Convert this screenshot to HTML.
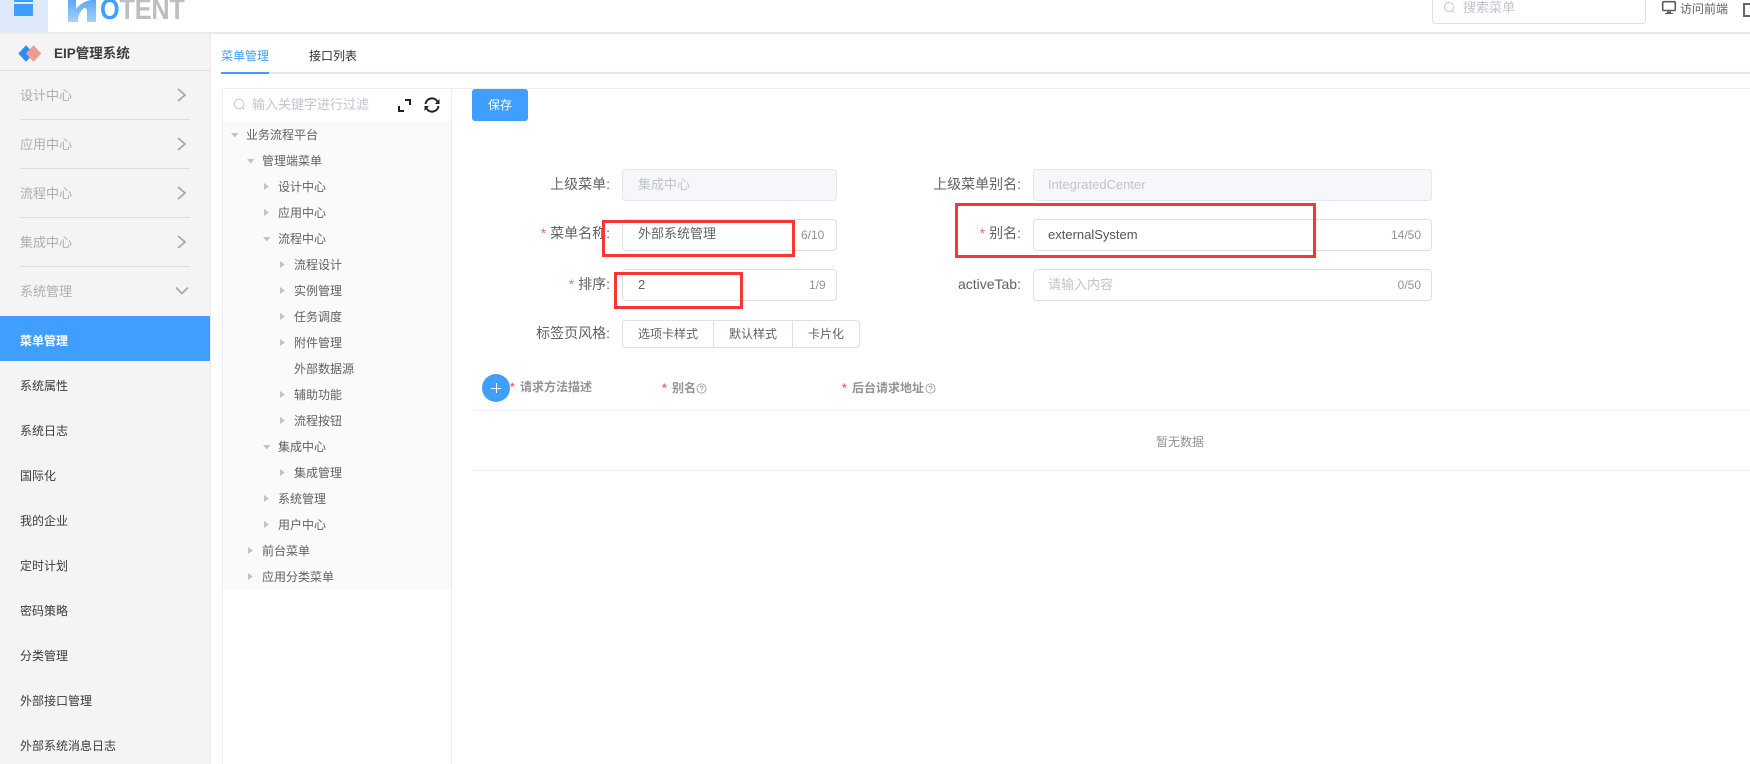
<!DOCTYPE html>
<html lang="zh">
<head>
<meta charset="utf-8">
<style>
html,body{margin:0;padding:0;width:1750px;height:764px;overflow:hidden;background:#fff}
body{position:relative;font-family:"Liberation Sans","Noto Sans CJK SC",sans-serif;color:#606266;font-size:12px}
.a{position:absolute}
.t{position:absolute;white-space:nowrap;line-height:20px;height:20px}
.r{text-align:right}
.box{position:absolute;box-sizing:border-box;border:1px solid #dcdfe6;border-radius:4px;background:#fff}
.dis{background:#f5f7fa;border-color:#e4e7ed}
.red{position:absolute;box-sizing:border-box;border:3px solid #f63737}
.m{color:#aeaeae;font-size:13px;left:20px}
.d{position:absolute;left:20px;width:170px;height:1px;background:#dcdcdc}
.s{color:#3b3b3b;font-size:12px;left:20px}
.n{color:#606266;font-size:12px}
.lb{color:#606266;font-size:14px;right:0}
.star{color:#f56c6c}
.c{color:#909399;font-size:12px}
.th{color:#909399;font-size:12px;font-weight:700}
</style>
</head>
<body>
<!-- header -->
<div class="a" style="left:0;top:0;width:48px;height:32px;background:#deeafc"></div>
<div class="a" style="left:14px;top:0;width:19px;height:16px;background:#409eff"></div>
<div class="a" style="left:14px;top:2px;width:19px;height:2px;background:#deeafc"></div>
<svg class="a" style="left:66px;top:0" width="34" height="23" viewBox="66 0 34 23">
<defs><linearGradient id="g" x1="0" y1="0" x2="0" y2="1"><stop offset="0" stop-color="#5aa9f5"/><stop offset="1" stop-color="#a9d0f8"/></linearGradient></defs>
<path d="M68 22V0H76V9C80 4 85 1 91 0H96V22H87V12C87 7 84 7 82 10C79 13 78 17 78 22Z" fill="url(#g)"/>
</svg>
<div class="t" style="left:100px;top:-5px;height:30px;line-height:30px;font-size:29px;font-weight:700;letter-spacing:-.2px;color:#bcbec2;transform:scaleX(.87);transform-origin:0 0"><span style="color:#409eff">O</span>TENT</div>
<div class="a" style="left:0;top:32px;width:1750px;height:2px;background:#e8e9eb"></div>

<div class="box" style="left:1432px;top:-10px;width:214px;height:34px;border-color:#dcdfe6"></div>
<svg class="a" style="left:1443px;top:1px" width="13" height="13" viewBox="0 0 13 13" fill="none" stroke="#c8ccd4" stroke-width="1.1"><circle cx="6" cy="6" r="4.6"/><path d="M9.5 9.5L11.5 11.5"/></svg>
<div class="t" style="left:1463px;top:-2px;font-size:13px;color:#c0c4cc">搜索菜单</div>
<svg class="a" style="left:1661px;top:0" width="16" height="15" viewBox="0 0 16 15" fill="none"><rect x="1.7" y="1.7" width="12.6" height="8.8" rx="1" stroke="#5c5c5c" stroke-width="1.6"/><path d="M6 11.5h4V13h2v1H4v-1h2z" fill="#5c5c5c"/></svg>
<div class="t" style="left:1680px;top:-1px;color:#606266">访问前端</div>
<svg class="a" style="left:1743px;top:3px" width="7" height="14" viewBox="0 0 7 14" fill="none" stroke="#666" stroke-width="2"><path d="M7 1H1V13H7"/></svg>

<!-- sidebar -->
<div class="a" style="left:0;top:34px;width:210px;height:730px;background:#f4f4f4;border-right:1px solid #e9e9ee"></div>
<svg class="a" style="left:18px;top:45px" width="24" height="17" viewBox="0 0 24 17"><path d="M8 1L1 8.500L8 16L15 8.500Z" fill="#2f8cf5" stroke="#2f8cf5" stroke-linejoin="round"/><path d="M15.500 1L8.500 8.500L15.500 16L22.500 8.500Z" fill="#ee9a90" stroke="#ee9a90" stroke-linejoin="round"/></svg>
<div class="t" style="left:54px;top:44px;font-size:13.500px;font-weight:700;color:#3d3d3d">EIP管理系统</div>
<div class="a" style="left:0;top:70px;width:210px;height:1px;background:#dcdcdc"></div>

<div class="t m" style="top:86px">设计中心</div><div class="d" style="top:119px"></div>
<div class="t m" style="top:135px">应用中心</div><div class="d" style="top:168px"></div>
<div class="t m" style="top:184px">流程中心</div><div class="d" style="top:217px"></div>
<div class="t m" style="top:233px">集成中心</div><div class="d" style="top:266px"></div>
<div class="t m" style="top:282px">系统管理</div>
<svg class="a" style="left:175px;top:86px" width="12" height="190" viewBox="0 0 12 190" fill="none" stroke="#a8a8a8" stroke-width="1.800">
<path d="M3 3L10 9L3 15"/><path d="M3 52L10 58L3 64"/><path d="M3 101L10 107L3 113"/><path d="M3 150L10 156L3 162"/></svg>
<svg class="a" style="left:175px;top:286px" width="14" height="10" viewBox="0 0 14 10" fill="none" stroke="#a8a8a8" stroke-width="1.800"><path d="M1 1.500L7 7.500L13 1.500"/></svg>

<div class="a" style="left:0;top:316px;width:210px;height:45px;background:#409eff"></div>
<div class="t" style="left:20px;top:331px;font-size:12px;font-weight:700;color:#fff">菜单管理</div>
<div class="t s" style="top:376px">系统属性</div>
<div class="t s" style="top:421px">系统日志</div>
<div class="t s" style="top:466px">国际化</div>
<div class="t s" style="top:511px">我的企业</div>
<div class="t s" style="top:556px">定时计划</div>
<div class="t s" style="top:601px">密码策略</div>
<div class="t s" style="top:646px">分类管理</div>
<div class="t s" style="top:691px">外部接口管理</div>
<div class="t s" style="top:736px">外部系统消息日志</div>

<!-- tabs -->
<div class="t" style="left:221px;top:46px;color:#409eff">菜单管理</div>
<div class="t" style="left:309px;top:46px;color:#303133">接口列表</div>
<div class="a" style="left:221px;top:72px;width:1529px;height:2px;background:#e4e7ed"></div>
<div class="a" style="left:221px;top:72px;width:48px;height:2px;background:#409eff"></div>

<!-- tree panel -->
<div class="a" style="left:222px;top:88px;width:1528px;height:1px;background:#eee"></div>
<div class="a" style="left:222px;top:88px;width:1px;height:676px;background:#eee"></div>
<div class="a" style="left:451px;top:88px;width:1px;height:676px;background:#eee"></div>
<div class="a" style="left:223px;top:121px;width:228px;height:468px;background:#fafafa"></div>
<svg class="a" style="left:233px;top:98px" width="13" height="13" viewBox="0 0 13 13" fill="none" stroke="#c8ccd4" stroke-width="1.100"><circle cx="6" cy="6" r="4.800"/><path d="M9.500 9.500L11.500 11.500"/></svg>
<div class="t" style="left:252px;top:95px;font-size:13px;color:#c0c4cc">输入关键字进行过滤</div>
<svg class="a" style="left:397px;top:98px" width="15" height="15" viewBox="0 0 15 15" fill="none" stroke="#222" stroke-width="2"><path d="M8 2H13V7"/><path d="M2 8V13H7"/></svg>
<svg class="a" style="left:423px;top:96px" width="18" height="18" viewBox="0 0 18 18" fill="none" stroke="#222" stroke-width="2"><path d="M2.500 8A6.500 6.500 0 0 1 14.500 5.500"/><path d="M15.500 10A6.500 6.500 0 0 1 3.500 12.500"/><path d="M16.500 3V8H12Z" fill="#222" stroke="none"/><path d="M1.500 15V10H6Z" fill="#222" stroke="none"/></svg>

<div class="t n" style="left:246px;top:125px">业务流程平台</div>
<div class="t n" style="left:262px;top:151px">管理端菜单</div>
<div class="t n" style="left:278px;top:177px">设计中心</div>
<div class="t n" style="left:278px;top:203px">应用中心</div>
<div class="t n" style="left:278px;top:229px">流程中心</div>
<div class="t n" style="left:294px;top:255px">流程设计</div>
<div class="t n" style="left:294px;top:281px">实例管理</div>
<div class="t n" style="left:294px;top:307px">任务调度</div>
<div class="t n" style="left:294px;top:333px">附件管理</div>
<div class="t n" style="left:294px;top:359px">外部数据源</div>
<div class="t n" style="left:294px;top:385px">辅助功能</div>
<div class="t n" style="left:294px;top:411px">流程按钮</div>
<div class="t n" style="left:278px;top:437px">集成中心</div>
<div class="t n" style="left:294px;top:463px">集成管理</div>
<div class="t n" style="left:278px;top:489px">系统管理</div>
<div class="t n" style="left:278px;top:515px">用户中心</div>
<div class="t n" style="left:262px;top:541px">前台菜单</div>
<div class="t n" style="left:262px;top:567px">应用分类菜单</div>
<svg class="a" style="left:222px;top:120px" width="70" height="470" viewBox="222 120 70 470" fill="#c0c4cc">
<path d="M231 133H238.500L234.750 137.500Z"/>
<path d="M247 159H254.500L250.750 163.500Z"/>
<path d="M264 183L269 186.500L264 190Z"/>
<path d="M264 209L269 212.500L264 216Z"/>
<path d="M263 237H270.500L266.750 241.500Z"/>
<path d="M280 261L285 264.500L280 268Z"/>
<path d="M280 287L285 290.500L280 294Z"/>
<path d="M280 313L285 316.500L280 320Z"/>
<path d="M280 339L285 342.500L280 346Z"/>
<path d="M280 391L285 394.500L280 398Z"/>
<path d="M280 417L285 420.500L280 424Z"/>
<path d="M263 445H270.500L266.750 449.500Z"/>
<path d="M280 469L285 472.500L280 476Z"/>
<path d="M264 495L269 498.500L264 502Z"/>
<path d="M264 521L269 524.500L264 528Z"/>
<path d="M248 547L253 550.500L248 554Z"/>
<path d="M248 573L253 576.500L248 580Z"/>
</svg>

<!-- save -->
<div class="a" style="left:472px;top:89px;width:56px;height:32px;background:#409eff;border-radius:3px;color:#fff;text-align:center;line-height:32px;font-size:12px">保存</div>

<!-- form left -->
<div class="t lb r" style="left:auto;right:1140px;top:174px">上级菜单:</div>
<div class="box dis" style="left:622px;top:169px;width:215px;height:32px"></div>
<div class="t" style="left:638px;top:175px;font-size:13px;color:#c0c4cc">集成中心</div>

<div class="t lb r" style="left:auto;right:1140px;top:223px"><span class="star">* </span>菜单名称:</div>
<div class="box" style="left:622px;top:219px;width:215px;height:32px"></div>
<div class="t" style="left:638px;top:224px;font-size:13px">外部系统管理</div>
<div class="t c" style="left:801px;top:225px">6/10</div>

<div class="t lb r" style="left:auto;right:1140px;top:274px"><span class="star">* </span>排序:</div>
<div class="box" style="left:622px;top:269px;width:215px;height:32px"></div>
<div class="t" style="left:638px;top:275px;font-size:13px">2</div>
<div class="t c" style="left:809px;top:275px">1/9</div>

<div class="t lb r" style="left:auto;right:1140px;top:323px">标签页风格:</div>
<div class="box" style="left:622px;top:320px;width:238px;height:28px"></div>
<div class="a" style="left:713px;top:320px;width:1px;height:28px;background:#dcdfe6"></div>
<div class="a" style="left:792px;top:320px;width:1px;height:28px;background:#dcdfe6"></div>
<div class="t" style="left:638px;top:324px">选项卡样式</div>
<div class="t" style="left:729px;top:324px">默认样式</div>
<div class="t" style="left:808px;top:324px">卡片化</div>

<!-- form right -->
<div class="t lb r" style="left:auto;right:729px;top:174px">上级菜单别名:</div>
<div class="box dis" style="left:1033px;top:169px;width:399px;height:32px"></div>
<div class="t" style="left:1048px;top:175px;font-size:13px;color:#c0c4cc">IntegratedCenter</div>

<div class="t lb r" style="left:auto;right:729px;top:223px"><span class="star">* </span>别名:</div>
<div class="box" style="left:1033px;top:219px;width:399px;height:32px"></div>
<div class="t" style="left:1048px;top:225px;font-size:13px;color:#555">externalSystem</div>
<div class="t c r" style="left:auto;right:329px;top:225px">14/50</div>

<div class="t lb r" style="left:auto;right:729px;top:274px">activeTab:</div>
<div class="box" style="left:1033px;top:269px;width:399px;height:32px"></div>
<div class="t" style="left:1048px;top:275px;font-size:13px;color:#c0c4cc">请输入内容</div>
<div class="t c r" style="left:auto;right:329px;top:275px">0/50</div>

<!-- red boxes -->
<div class="red" style="left:602px;top:220px;width:193px;height:37px"></div>
<div class="red" style="left:614px;top:272px;width:129px;height:37px"></div>
<div class="red" style="left:955px;top:203px;width:361px;height:55px"></div>

<!-- table -->
<div class="a" style="left:482px;top:374px;width:28px;height:28px;border-radius:50%;background:#409eff"></div>
<div class="a" style="left:491px;top:387.500px;width:10px;height:1px;background:#fff"></div>
<div class="a" style="left:495.500px;top:383px;width:1px;height:10px;background:#fff"></div>
<div class="t th" style="left:510px;top:377px"><span class="star">*</span></div>
<div class="t th" style="left:520px;top:377px">请求方法描述</div>
<div class="t th" style="left:662px;top:378px"><span class="star">*</span></div>
<div class="t th" style="left:672px;top:378px">别名</div>
<svg class="a" style="left:696px;top:383px" width="11" height="11" viewBox="0 0 11 11" fill="none" stroke="#909399" stroke-width=".8"><circle cx="5.500" cy="5.500" r="4.600"/><path d="M3.900 4.300C4 2.600 7.100 2.600 7.100 4.300C7.100 5.400 5.500 5.300 5.500 6.600M5.500 7.500V8.300"/></svg>
<div class="t th" style="left:842px;top:378px"><span class="star">*</span></div>
<div class="t th" style="left:852px;top:378px">后台请求地址</div>
<svg class="a" style="left:925px;top:383px" width="11" height="11" viewBox="0 0 11 11" fill="none" stroke="#909399" stroke-width=".8"><circle cx="5.500" cy="5.500" r="4.600"/><path d="M3.900 4.300C4 2.600 7.100 2.600 7.100 4.300C7.100 5.400 5.500 5.300 5.500 6.600M5.500 7.500V8.300"/></svg>
<div class="a" style="left:472px;top:410px;width:1278px;height:1px;background:#ebeef5"></div>
<div class="t c" style="left:1156px;top:432px">暂无数据</div>
<div class="a" style="left:472px;top:470px;width:1278px;height:1px;background:#ebeef5"></div>
</body>
</html>
